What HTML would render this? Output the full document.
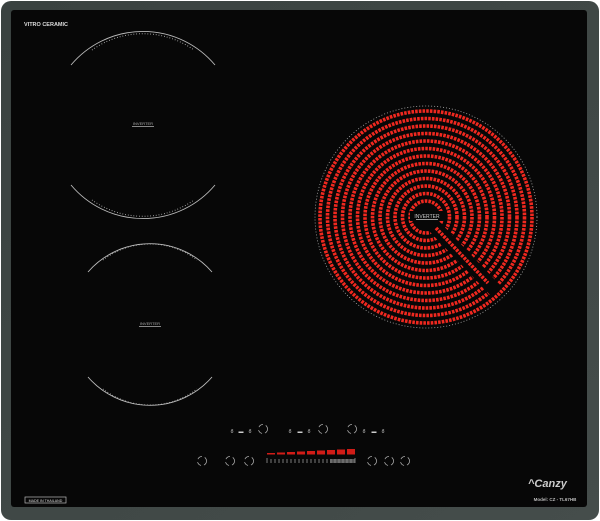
<!DOCTYPE html>
<html><head><style>
html,body{margin:0;padding:0;background:#fff;}
body{width:600px;height:521px;position:relative;overflow:hidden;font-family:"Liberation Sans",sans-serif;}
</style></head><body>
<svg width="600" height="521" viewBox="0 0 600 521" xmlns="http://www.w3.org/2000/svg" style="position:absolute;left:0;top:0">
<defs>
<linearGradient id="fr" x1="0" y1="0" x2="1" y2="1"><stop offset="0" stop-color="#3a4240"/><stop offset="1" stop-color="#454d4b"/></linearGradient>
</defs>
<rect x="1" y="1" width="598" height="519" rx="10" fill="url(#fr)"/>
<rect x="11" y="10" width="576" height="497" rx="3" fill="#070707"/>
<text x="24" y="26" font-size="5.5" font-weight="bold" fill="#ddd">VITRO CERAMIC</text>
<g fill="none" stroke="#bbb">
<path d="M71 65 A94 94 0 0 1 215 65" stroke-width="0.9"/>
<path d="M92 50 A88 88 0 0 1 194 50" stroke-width="1" stroke-dasharray="0.8 2" />
<path d="M71 185 A94 94 0 0 0 215 185" stroke-width="0.9"/>
<path d="M92 200 A88 88 0 0 0 194 200" stroke-width="1" stroke-dasharray="0.8 2"/>
<path d="M88 272 A82 82 0 0 1 212 272" stroke-width="0.9"/>
<path d="M103 260 A77 77 0 0 1 197 260" stroke-width="1" stroke-dasharray="0.8 2"/>
<path d="M88 377 A82 82 0 0 0 212 377" stroke-width="0.9"/>
<path d="M103 389 A77 77 0 0 0 197 389" stroke-width="1" stroke-dasharray="0.8 2"/>
</g>
<text x="143" y="125" font-size="4" fill="#aaa" text-anchor="middle">INVERTER</text>
<rect x="132" y="126" width="22" height="1" fill="#888"/>
<text x="150" y="325" font-size="4" fill="#aaa" text-anchor="middle">INVERTER</text>
<rect x="139" y="326" width="22" height="1" fill="#888"/>
<circle cx="426" cy="217" r="111" fill="none" stroke="#aaa" stroke-width="0.8" stroke-dasharray="1 2"/>
<g fill="none" stroke="#f0281f" stroke-width="3.6" stroke-dasharray="2.6 1.1">
<circle cx="426" cy="217" r="106"/>
<circle cx="426" cy="217" r="98.5"/>
<circle cx="426" cy="217" r="91"/>
<circle cx="426" cy="217" r="83.5"/>
<circle cx="426" cy="217" r="76"/>
<circle cx="426" cy="217" r="68.5"/>
<circle cx="426" cy="217" r="61"/>
<circle cx="426" cy="217" r="53.5"/>
<circle cx="426" cy="217" r="46"/>
<circle cx="426" cy="217" r="38.5"/>
<circle cx="426" cy="217" r="31"/>
<circle cx="426" cy="217" r="23.5"/>
<circle cx="426" cy="217" r="16"/>
</g>
<line x1="433" y1="225" x2="497" y2="292" stroke="#070707" stroke-width="14"/>
<line x1="436" y1="228" x2="488" y2="283" stroke="#f0281f" stroke-width="3.6" stroke-dasharray="2.6 1.1"/>
<rect x="410" y="211" width="34" height="10" fill="#070707"/>
<text x="427" y="218" font-size="5" fill="#ccc" text-anchor="middle">INVERTER</text>
<rect x="416" y="219" width="22" height="1" fill="#999"/>
<g fill="#ccc" font-size="5" text-anchor="middle">
<text x="232" y="433">ő</text><text x="241" y="433">▬</text><text x="250" y="433">ő</text>
<text x="290" y="433">ő</text><text x="300" y="433">▬</text><text x="309" y="433">ő</text>
<text x="364" y="433">ő</text><text x="374" y="433">▬</text><text x="383" y="433">ő</text>
</g>
<g fill="none" stroke="#bbb" stroke-width="0.7">
<circle cx="263" cy="429" r="4.5" stroke-dasharray="5 3"/>
<circle cx="323" cy="429" r="4.5" stroke-dasharray="5 3"/>
<circle cx="352" cy="429" r="4.5" stroke-dasharray="5 3"/>
<circle cx="202" cy="461" r="4.5" stroke-dasharray="5 3"/>
<circle cx="230" cy="461" r="4.5" stroke-dasharray="5 3"/>
<circle cx="249" cy="461" r="4.5" stroke-dasharray="5 3"/>
<circle cx="372" cy="461" r="4.5" stroke-dasharray="5 3"/>
<circle cx="389" cy="461" r="4.5" stroke-dasharray="5 3"/>
<circle cx="405" cy="461" r="4.5" stroke-dasharray="5 3"/>
</g>
<g fill="#d01c17">
<rect x="267" y="453" width="8" height="1.5"/>
<rect x="277" y="452.5" width="8" height="2"/>
<rect x="287" y="452" width="8" height="2.5"/>
<rect x="297" y="451.5" width="8" height="3"/>
<rect x="307" y="451" width="8" height="3.5"/>
<rect x="317" y="450.5" width="8" height="4"/>
<rect x="327" y="450" width="8" height="4.5"/>
<rect x="337" y="449.5" width="8" height="5"/>
<rect x="347" y="449" width="8" height="5.5"/>
</g>
<g stroke="#aaa" stroke-width="0.7">
<path d="M267 458v5M271 459v4M275 459v4M279 459v4M283 459v4M287 459v4M291 459v4M295 459v4M299 459v4M303 459v4M307 459v4M311 459v4M315 459v4M319 459v4M323 459v4M327 459v4M331 459v4M335 459v4M339 459v4M343 459v4M347 459v4M351 459v4M355 458v5"/>
</g>
<rect x="330" y="459" width="25" height="4" fill="#888" opacity="0.6"/>
<rect x="25" y="497" width="41" height="6" fill="none" stroke="#bbb" stroke-width="0.7"/>
<text x="45.5" y="502" font-size="3.6" fill="#ddd" text-anchor="middle">MADE IN THAILAND</text>
<text x="528" y="487" font-size="11" font-style="italic" font-weight="bold" fill="#ccc">^Canzy</text>
<text x="555" y="501" font-size="4.5" font-weight="bold" fill="#bbb" text-anchor="middle">Model: CZ - TL67HB</text>
</svg>
</body></html>
